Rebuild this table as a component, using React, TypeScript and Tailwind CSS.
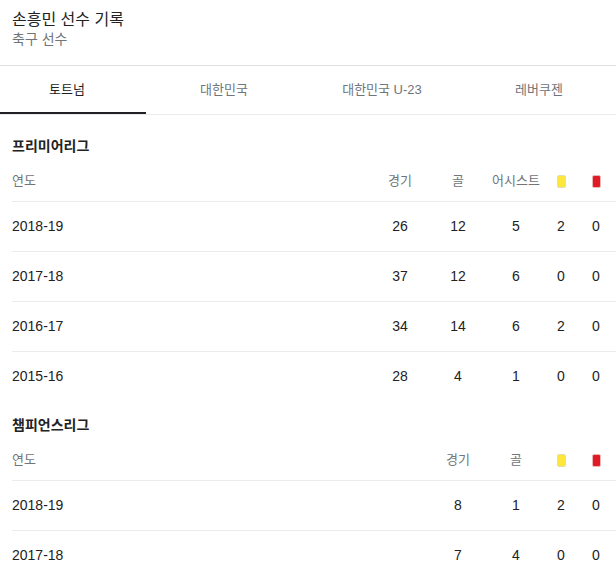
type Row = { season: string; stats: number[] }

type Section = {
    title: string
    columns: string[]
    rows: Row[]
}

const TABS = [
    { label: '토트넘', width: 'w-[146px] pr-[12px]', active: true },
    { label: '대한민국', width: 'w-[156px]', active: false },
    { label: '대한민국 U-23', width: 'w-[160px]', active: false },
    { label: '레버쿠젠', width: 'w-[154px]', active: false },
]

// slot widths counted from the right edge: red, yellow, assists, goals, games
const SLOT_WIDTHS = ['w-[40px]', 'w-[30px]', 'w-[60px]', 'w-[56px]', 'w-[60px]']

const SECTIONS: Section[] = [
    {
        title: '프리미어리그',
        columns: ['경기', '골', '어시스트', 'yellow', 'red'],
        rows: [
            { season: '2018-19', stats: [26, 12, 5, 2, 0] },
            { season: '2017-18', stats: [37, 12, 6, 0, 0] },
            { season: '2016-17', stats: [34, 14, 6, 2, 0] },
            { season: '2015-16', stats: [28, 4, 1, 0, 0] },
        ],
    },
    {
        title: '챔피언스리그',
        columns: ['경기', '골', 'yellow', 'red'],
        rows: [
            { season: '2018-19', stats: [8, 1, 2, 0] },
            { season: '2017-18', stats: [7, 4, 0, 0] },
        ],
    },
]

const slotWidth = (index: number, count: number) => SLOT_WIDTHS[count - 1 - index]

const Card = ({ color }: { color: 'yellow' | 'red' }) => (
    <span
        className={
            color === 'yellow'
                ? 'inline-block h-[13px] w-[9px] rounded-[2px] border border-[#e4deb4] bg-[#fde73b]'
                : 'inline-block h-[13px] w-[9px] rounded-[2px] border border-[#e8b8b8] bg-[#e21a23]'
        }
    />
)

const HeaderCell = ({ label }: { label: string }) => {
    if (label === 'yellow' || label === 'red') {
        return <Card color={ label }/>
    }
    return <span>{ label }</span>
}

const StatsTable = ({ section, first }: { section: Section, first: boolean }) => (
    <section className={ first ? 'pt-[7px]' : '' }>
        <h3 className="h-[39px] pl-3 pt-[14px] text-[14px] font-bold leading-[20px] text-[#222]">{ section.title }</h3>
        <div className="ml-3">
            <div className="flex h-[40px] items-center text-[13px] text-[#70757a]">
                <div className="flex-1">연도</div>
                {
                    section.columns.map((col, i) =>
                        <div key={ col } className={ `${ slotWidth(i, section.columns.length) } flex justify-center` }>
                            <HeaderCell label={ col }/>
                        </div>,
                    )
                }
            </div>
            {
                section.rows.map(row =>
                    <div key={ row.season } className="flex h-[50px] items-center border-t border-[#ebebeb] text-[14px] text-[#222]">
                        <div className="flex-1">{ row.season }</div>
                        {
                            row.stats.map((value, i) =>
                                <div key={ i } className={ `${ slotWidth(i, row.stats.length) } text-center` }>{ value }</div>,
                            )
                        }
                    </div>,
                )
            }
        </div>
    </section>
)

export default function App() {
    return (
        <div className="h-[576px] w-[616px] overflow-hidden bg-white font-['Liberation_Sans','Noto_Sans_CJK_KR',sans-serif]">
            <header className="h-[66px] border-b border-[#e0e0e0] pl-3 pt-[10px]">
                <h1 className="text-[16px] leading-[20px] text-[#222]">손흥민 선수 기록</h1>
                <div className="text-[14px] leading-[18px] text-[#70757a]">축구 선수</div>
            </header>

            <nav className="flex h-[49px] border-b border-[#ebebeb]">
                {
                    TABS.map(tab =>
                        <div key={ tab.label }
                             className={ `${ tab.width } flex items-center justify-center text-[13px] ${ tab.active ? 'border-b-2 border-[#202124] pt-[2px] text-[#222]' : 'text-[#70757a]' }` }>
                            { tab.label }
                        </div>,
                    )
                }
            </nav>

            {
                SECTIONS.map((section, i) =>
                    <StatsTable key={ section.title } section={ section } first={ i === 0 }/>,
                )
            }
        </div>
    )
}
